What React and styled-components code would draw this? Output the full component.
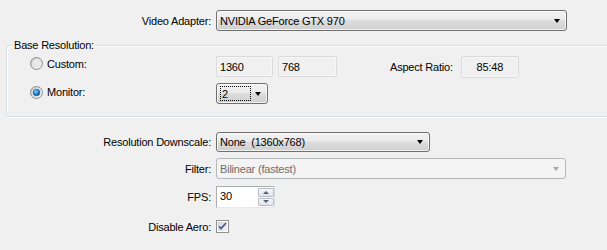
import styled, { createGlobalStyle } from 'styled-components'

const GlobalStyle = createGlobalStyle`
  html, body {
    margin: 0;
    padding: 0;
    background: #f0f0f0;
  }
  body {
    font-family: "Liberation Sans", Arial, sans-serif;
    font-size: 11px;
    letter-spacing: -0.2px;
    color: #000;
  }
`

const Panel = styled.div`
  width: 607px;
  height: 250px;
  overflow: hidden;
  padding-top: 10px;
  box-sizing: border-box;
  background: #f0f0f0;
`

const Row = styled.div`
  display: flex;
  align-items: center;
  height: ${(p) => p.$h || 21}px;
  margin-top: ${(p) => p.$mt || 0}px;
`

const Label = styled.label`
  width: 216px;
  padding-right: 5px;
  box-sizing: border-box;
  text-align: right;
  white-space: nowrap;
`

const Combo = styled.div`
  display: flex;
  align-items: center;
  justify-content: space-between;
  width: ${(p) => p.$w}px;
  height: ${(p) => p.$h || 21}px;
  box-sizing: border-box;
  padding: 0 6px 0 3px;
  border: 1px solid ${(p) => (p.$disabled ? '#b5b8bb' : '#707070')};
  border-radius: 3px;
  color: ${(p) => (p.$disabled ? '#6d6d6d' : '#000')};
  background: ${(p) =>
    p.$disabled
      ? '#f4f4f4'
      : 'linear-gradient(#f2f2f2 0%, #ebebeb 45%, #dddddd 50%, #cfcfcf 100%)'};
  box-shadow: ${(p) => (p.$disabled ? 'none' : 'inset 0 0 0 1px rgba(255,255,255,0.7)')};
  white-space: pre;
`

const Arrow = styled.span`
  width: 0;
  height: 0;
  border-left: 3.5px solid transparent;
  border-right: 3.5px solid transparent;
  border-top: 4px solid ${(p) => (p.$disabled ? '#a8a8a8' : '#000')};
`

const FocusText = styled.span`
  display: inline-block;
  width: 31px;
  height: 15px;
  line-height: 15px;
  box-sizing: border-box;
  padding-left: 1px;
  border: 1px dotted #000;
`

const Group = styled.fieldset`
  margin: 8px 0 0 6px;
  width: 620px;
  padding: 0 0 12px 0;
  border: 1px solid #d5dfe5;
  border-radius: 3px;
  box-shadow: inset 1px 1px 0 #fff, 1px 1px 0 #fff;
  box-sizing: border-box;
`

const Legend = styled.legend`
  margin-left: 6px;
  padding: 0 1px;
  line-height: 13px;
`

const OptionCell = styled.div`
  display: flex;
  align-items: center;
  gap: 4px;
  width: 209px;
  padding-left: 23px;
  margin-bottom: ${(p) => p.$lift || 0}px;
  box-sizing: border-box;
`

const TextBox = styled.div`
  width: ${(p) => p.$w}px;
  height: ${(p) => p.$h || 21}px;
  box-sizing: border-box;
  display: flex;
  align-items: center;
  justify-content: ${(p) => (p.$center ? 'center' : 'flex-start')};
  padding-left: ${(p) => (p.$center ? 0 : 3)}px;
  margin-right: ${(p) => p.$mr || 0}px;
  border: 1px solid ${(p) => (p.$readOnly ? '#dadada' : '#abadb3')};
  border-radius: 2px;
  background: ${(p) => (p.$readOnly ? '#f0f0f0' : '#fff')};
  box-shadow: ${(p) => (p.$readOnly ? 'inset 0 0 0 1px #f7f7f7' : 'none')};
`

const InlineLabel = styled.span`
  margin-right: 8px;
  white-space: nowrap;
`

const Spin = styled.div`
  display: flex;
  align-items: stretch;
  width: 59px;
  height: 22px;
  box-sizing: border-box;
  border: 1px solid #abadb3;
  border-right-color: #dbdfe6;
  border-bottom-color: #e3e9ef;
  background: #fff;
`

const SpinText = styled.div`
  flex: 1;
  padding: 3px 0 0 3px;
`

const SpinButtons = styled.div`
  display: flex;
  flex-direction: column;
  gap: 1px;
  padding: 1px 0;
  width: 16px;
`

const SpinButton = styled.div`
  flex: 1;
  display: flex;
  align-items: center;
  justify-content: center;
  border: 1px solid #b6bcc6;
  border-radius: 1px;
  background: linear-gradient(#f7f8fa, #e2e5ea);
`

const SpinArrow = styled.span`
  width: 0;
  height: 0;
  border-left: 3px solid transparent;
  border-right: 3px solid transparent;
  ${(p) =>
    p.$up ? 'border-bottom: 3px solid #4d6185;' : 'border-top: 3px solid #4d6185;'}
`

function Radio({ checked }) {
  return (
    <svg width="13" height="13" viewBox="0 0 13 13">
      <defs>
        <linearGradient id="rbg" x1="0" y1="0" x2="1" y2="1">
          <stop offset="0" stopColor="#c7c7c7" />
          <stop offset="1" stopColor="#f6f6f6" />
        </linearGradient>
        <radialGradient id="rdot" cx="0.4" cy="0.35" r="0.7">
          <stop offset="0" stopColor="#8fd5ff" />
          <stop offset="0.5" stopColor="#2e8bd6" />
          <stop offset="1" stopColor="#0c4e8a" />
        </radialGradient>
      </defs>
      <circle cx="6.5" cy="6.5" r="6" fill="url(#rbg)" stroke="#8e8f8f" />
      <circle cx="6.5" cy="6.5" r="4.2" fill="#e8e8e8" />
      {checked && <circle cx="6.5" cy="6.5" r="3.3" fill="url(#rdot)" stroke="#1b4d80" strokeWidth="0.6" />}
    </svg>
  )
}

function CheckBox() {
  return (
    <svg width="13" height="13" viewBox="0 0 13 13">
      <defs>
        <linearGradient id="cbg" x1="0" y1="0" x2="1" y2="1">
          <stop offset="0" stopColor="#d6d6d6" />
          <stop offset="1" stopColor="#f2f2f2" />
        </linearGradient>
      </defs>
      <rect x="0.5" y="0.5" width="12" height="12" fill="#fff" stroke="#8f8f8f" />
      <rect x="2" y="2" width="9" height="9" fill="url(#cbg)" />
      <path d="M3 6.2 L5 8.7 L10 3" fill="none" stroke="#4a5f97" strokeWidth="1.8" />
    </svg>
  )
}

export default function App() {
  return (
    <>
      <GlobalStyle />
      <Panel>
        <Row>
          <Label>Video Adapter:</Label>
          <Combo $w={351}>
            <span>NVIDIA GeForce GTX 970</span>
            <Arrow />
          </Combo>
        </Row>

        <Group>
          <Legend>Base Resolution:</Legend>
          <Row $mt={4}>
            <OptionCell $lift={6}>
              <Radio />
              <span>Custom:</span>
            </OptionCell>
            <TextBox $w={57} $mr={5} $readOnly>1360</TextBox>
            <TextBox $w={59} $mr={53} $readOnly>768</TextBox>
            <InlineLabel>Aspect Ratio:</InlineLabel>
            <TextBox $w={58} $h={22} $readOnly $center>85:48</TextBox>
          </Row>
          <Row $mt={6}>
            <OptionCell $lift={3}>
              <Radio checked />
              <span>Monitor:</span>
            </OptionCell>
            <Combo $w={52}>
              <FocusText>2</FocusText>
              <Arrow />
            </Combo>
          </Row>
        </Group>

        <Row $mt={15} $h={20}>
          <Label>Resolution Downscale:</Label>
          <Combo $w={214} $h={20}>
            <span>None  (1360x768)</span>
            <Arrow />
          </Combo>
        </Row>
        <Row $mt={6}>
          <Label>Filter:</Label>
          <Combo $w={350} $disabled>
            <span>Bilinear (fastest)</span>
            <Arrow $disabled />
          </Combo>
        </Row>
        <Row $mt={7} $h={22}>
          <Label>FPS:</Label>
          <Spin>
            <SpinText>30</SpinText>
            <SpinButtons>
              <SpinButton>
                <SpinArrow $up />
              </SpinButton>
              <SpinButton>
                <SpinArrow />
              </SpinButton>
            </SpinButtons>
          </Spin>
        </Row>
        <Row $mt={12} $h={13}>
          <Label>Disable Aero:</Label>
          <CheckBox />
        </Row>
      </Panel>
    </>
  )
}
